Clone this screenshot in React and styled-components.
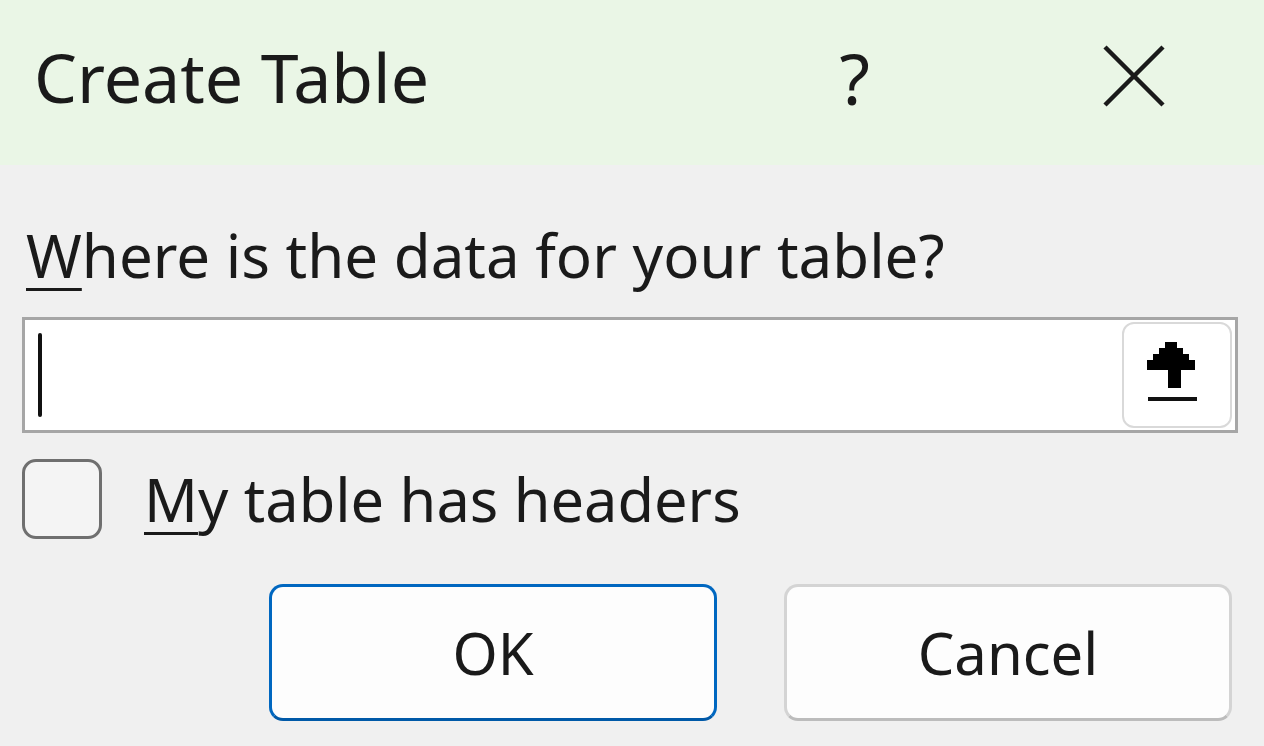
import React from "react";
import styled, { createGlobalStyle } from "styled-components";

const GlobalStyle = createGlobalStyle`
  html, body {
    margin: 0;
    padding: 0;
    background: #f0f0f0;
  }
  body {
    font-family: "Noto Sans", "Open Sans", sans-serif;
    color: #1a1a1a;
  }
`;

const App = () => {
  return (
    <Dialog>
      <GlobalStyle />
      <TitleBar>
        <Title>Create Table</Title>
        <TitleActions>
          <HelpButton>?</HelpButton>
          <CloseButton aria-label="Close">
            <svg width="64" height="64" viewBox="0 0 64 64">
              <path d="M3 3 L61 61 M61 3 L3 61" stroke="#1a1a1a" strokeWidth="4.5" />
            </svg>
          </CloseButton>
        </TitleActions>
      </TitleBar>
      <Body>
        <Label>
          <u>W</u>here is the data for your table?
        </Label>
        <RangeField>
          <Caret />
          <PickButton aria-label="Collapse dialog">
            <svg width="50" height="60" viewBox="0 0 50 60">
              <path
                d="M18 0 H30 V6 H36 V12 H42 V18 H48 V28 H34 V46 H21 V28 H0 V18 H6 V12 H12 V6 H18 Z"
                fill="#000"
              />
              <rect x="1" y="55" width="49" height="4" fill="#111" />
            </svg>
          </PickButton>
        </RangeField>
        <CheckRow>
          <CheckBox />
          <CheckLabel>
            <u>M</u>y table has headers
          </CheckLabel>
        </CheckRow>
        <ButtonRow>
          <DialogButton primary>OK</DialogButton>
          <DialogButton>Cancel</DialogButton>
        </ButtonRow>
      </Body>
    </Dialog>
  );
};

export default App;

const Dialog = styled.div`
  width: 1264px;
  height: 746px;
  display: flex;
  flex-direction: column;
  background: #f0f0f0;
  overflow: hidden;
`;

const TitleBar = styled.div`
  height: 165px;
  flex-shrink: 0;
  display: flex;
  align-items: center;
  justify-content: space-between;
  padding: 0 98px 0 34px;
  background: #eaf6e6;
  box-sizing: border-box;
`;

const Title = styled.div`
  font-size: 68px;
  line-height: 1;
  color: #1a1a1a;
  margin-top: -12px;
`;

const TitleActions = styled.div`
  display: flex;
  align-items: center;
  gap: 232px;
  margin-top: -14px;
`;

const HelpButton = styled.div`
  font-size: 70px;
  line-height: 1;
  color: #1a1a1a;
  margin-left: -4px;
  margin-top: 4px;
`;

const CloseButton = styled.div`
  display: flex;
  width: 64px;
  height: 64px;
`;

const Body = styled.div`
  flex: 1;
  display: flex;
  flex-direction: column;
  padding: 60px 26px 0 22px;
`;

const Label = styled.div`
  font-size: 60px;
  line-height: 1;
  padding-left: 4px;
  color: #1a1a1a;
  u {
    text-decoration-thickness: 3px;
    text-underline-offset: 10px;
  }
`;

const RangeField = styled.div`
  margin-top: 32px;
  height: 116px;
  box-sizing: border-box;
  border: 3px solid #a6a6a6;
  background: #fff;
  display: flex;
  align-items: center;
  justify-content: space-between;
  padding: 0 3px 0 13px;
`;

const Caret = styled.div`
  width: 4px;
  height: 84px;
  background: #111;
  border-radius: 2px;
`;

const PickButton = styled.div`
  width: 110px;
  height: 106px;
  box-sizing: border-box;
  border: 2px solid #d9d9d9;
  border-radius: 12px;
  background: #fff;
  display: flex;
  align-items: center;
  justify-content: center;
  padding: 0 10px 6px 0;
`;

const CheckRow = styled.div`
  margin-top: 26px;
  display: flex;
  align-items: center;
  gap: 42px;
`;

const CheckBox = styled.div`
  width: 80px;
  height: 80px;
  box-sizing: border-box;
  border: 3px solid #6f6f6f;
  border-radius: 14px;
  background: #f4f4f4;
`;

const CheckLabel = styled.div`
  font-size: 59.5px;
  line-height: 1;
  color: #1a1a1a;
  u {
    text-decoration-thickness: 3px;
    text-underline-offset: 10px;
  }
`;

const ButtonRow = styled.div`
  margin-top: 45px;
  display: flex;
  justify-content: flex-end;
  gap: 67px;
  padding-right: 6px;
`;

const DialogButton = styled.div`
  width: 448px;
  height: 137px;
  box-sizing: border-box;
  border-radius: 14px;
  background: #fdfdfd;
  border: 3px solid ${(p) => (p.primary ? "#0067c0" : "#d4d4d4")};
  border-bottom-color: ${(p) => (p.primary ? "#0059a8" : "#bcbcbc")};
  display: flex;
  align-items: center;
  justify-content: center;
  font-size: 58px;
  color: #1a1a1a;
`;
